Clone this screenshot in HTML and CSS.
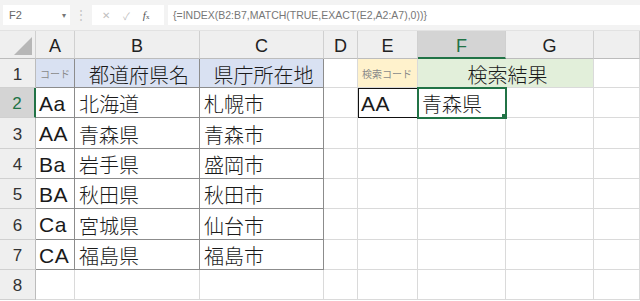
FILE: index.html
```html
<!DOCTYPE html>
<html lang="ja">
<head>
  <meta charset="UTF-8">
  <title>INDEX MATCH EXACT</title>
  <link rel="stylesheet" href="styles.css">
</head>
<body>
  <div class="toolbar">
    <div class="namebox"><span>F2</span><span class="drop">&#9662;</span></div>
    <div class="grip">&#8942;</div>
    <div class="btns">
      <span class="ico">&#10005;</span>
      <span class="ico">&#10003;</span>
      <span class="fx"><i>f</i><small>x</small></span>
    </div>
    <div class="formula">{=INDEX(B2:B7,MATCH(TRUE,EXACT(E2,A2:A7),0))}</div>
  </div>

  <div class="sheet">
    <!-- column headers -->
    <div class="hd corner"><span class="tri"></span></div>
    <div class="hd">A</div>
    <div class="hd">B</div>
    <div class="hd">C</div>
    <div class="hd">D</div>
    <div class="hd">E</div>
    <div class="hd sel">F</div>
    <div class="hd">G</div>
    <div class="hd"></div>

    <!-- row 1 -->
    <div class="rh">1</div>
    <div class="c t blue tiny">コード</div>
    <div class="c t blue mid">都道府県名</div>
    <div class="c t blue mid">県庁所在地</div>
    <div class="c"></div>
    <div class="c cream tiny">検索コード</div>
    <div class="c green mid span2">検索結果</div>
    <div class="c"></div>

    <!-- row 2 -->
    <div class="rh sel">2</div>
    <div class="c t lat">Aa</div>
    <div class="c t">北海道</div>
    <div class="c t">札幌市</div>
    <div class="c"></div>
    <div class="c lat key">AA</div>
    <div class="c active">青森県</div>
    <div class="c"></div>
    <div class="c"></div>

    <!-- row 3 -->
    <div class="rh">3</div>
    <div class="c t lat">AA</div>
    <div class="c t">青森県</div>
    <div class="c t">青森市</div>
    <div class="c"></div><div class="c"></div><div class="c"></div><div class="c"></div><div class="c"></div>

    <!-- row 4 -->
    <div class="rh">4</div>
    <div class="c t lat">Ba</div>
    <div class="c t">岩手県</div>
    <div class="c t">盛岡市</div>
    <div class="c"></div><div class="c"></div><div class="c"></div><div class="c"></div><div class="c"></div>

    <!-- row 5 -->
    <div class="rh">5</div>
    <div class="c t lat">BA</div>
    <div class="c t">秋田県</div>
    <div class="c t">秋田市</div>
    <div class="c"></div><div class="c"></div><div class="c"></div><div class="c"></div><div class="c"></div>

    <!-- row 6 -->
    <div class="rh">6</div>
    <div class="c t lat">Ca</div>
    <div class="c t">宮城県</div>
    <div class="c t">仙台市</div>
    <div class="c"></div><div class="c"></div><div class="c"></div><div class="c"></div><div class="c"></div>

    <!-- row 7 -->
    <div class="rh">7</div>
    <div class="c t lat">CA</div>
    <div class="c t">福島県</div>
    <div class="c t">福島市</div>
    <div class="c"></div><div class="c"></div><div class="c"></div><div class="c"></div><div class="c"></div>

    <!-- row 8 -->
    <div class="rh">8</div>
    <div class="c"></div><div class="c"></div><div class="c"></div><div class="c"></div>
    <div class="c"></div><div class="c"></div><div class="c"></div><div class="c"></div>
  </div>
</body>
</html>
```

FILE: styles.css
```css
body {
  margin: 0;
  width: 640px;
  height: 301px;
  overflow: hidden;
  background: #fff;
  font-family: 'Liberation Sans', 'Noto Sans CJK JP', sans-serif;
  color: #222;
}
.toolbar {
  height: 31px;
  background: #f3f3f3;
  display: flex;
  align-items: center;
  padding-left: 3px;
  box-sizing: border-box;
  border-bottom: 1px solid #e2e2e2;
}
.namebox {
  width: 67px;
  height: 20px;
  background: #fff;
  display: flex;
  align-items: center;
  justify-content: space-between;
  padding: 0 4px 0 6px;
  box-sizing: border-box;
  font-size: 11px;
  color: #666;
}
.drop {
  font-size: 8px;
  color: #777;
}
.grip {
  width: 22px;
  text-align: center;
  color: #c4c4c4;
  font-size: 12px;
}
.btns {
  width: 72px;
  height: 20px;
  background: #fff;
  display: flex;
  align-items: center;
  gap: 13px;
  padding-left: 10px;
  box-sizing: border-box;
}
.ico {
  font-size: 10px;
  color: #c0c0c0;
}
.fx {
  font-family: 'Liberation Serif', serif;
  font-size: 11px;
  color: #555;
}
.fx small {
  font-size: 7px;
}
.formula {
  flex: 1;
  height: 20px;
  margin-left: 4px;
  background: #fff;
  font-size: 10.5px;
  color: #777;
  line-height: 20px;
  padding-left: 5px;
}

.sheet {
  display: grid;
  grid-template-columns: 36px 39px 125px 124px 34px 60px 88px 88px 1fr;
  grid-template-rows: 28px 29px 30px 31px 30px 30px 31px 30px 30px;
}
.sheet > div {
  box-sizing: border-box;
  border-right: 1px solid #dadada;
  border-bottom: 1px solid #dadada;
  display: flex;
  align-items: center;
  white-space: nowrap;
  overflow: hidden;
}
.sheet > .hd {
  background: #efefef;
  justify-content: center;
  font-size: 18px;
  padding-top: 4px;
  color: #222;
  border-right-color: #d0d0d0;
  border-bottom-color: #bcbcbc;
}
.sheet > .corner {
  justify-content: flex-end;
  align-items: flex-end;
  padding: 0 3px 3px 0;
}
.tri {
  width: 18px;
  height: 18px;
  background: #b7b7b7;
  clip-path: polygon(100% 0, 100% 100%, 0 100%);
}
.sheet > .rh {
  background: #efefef;
  justify-content: center;
  font-size: 17px;
  padding-top: 3px;
  color: #333;
  border-right-color: #bcbcbc;
  border-bottom-color: #d0d0d0;
}
.sheet > .sel {
  background: #d4d4d4;
  color: #217346;
}
.sheet > .hd.sel {
  border-bottom: 2px solid #217346;
}
.sheet > .rh.sel {
  border-right: 2px solid #217346;
}

.sheet > .c {
  font-size: 20px;
  font-weight: 300;
  color: #1a1a1a;
  padding: 2px 0 0 4px;
}
.sheet > .t {
  border-right-color: #8c8c8c;
  border-bottom-color: #8c8c8c;
}
.sheet > .lat {
  font-size: 21px;
  font-weight: 400;
  letter-spacing: 0.5px;
  padding-left: 3px;
}
.mid {
  justify-content: center;
}
.sheet > .tiny {
  font-size: 10px;
  font-weight: 400;
  color: #8a8a8a;
  padding-top: 0;
}
.blue {
  background: #d9e1f2;
}
.cream {
  background: #fff2cc;
}
.green {
  background: #e2efda;
}
.span2 {
  grid-column: span 2;
}
.key {
  outline: 1px solid #111;
  outline-offset: -1px;
}
.active {
  position: relative;
  outline: 2px solid #217346;
  outline-offset: -1px;
}
.active::after {
  content: '';
  position: absolute;
  right: -3px;
  bottom: -3px;
  width: 5px;
  height: 5px;
  background: #217346;
  border: 1px solid #fff;
}
```
